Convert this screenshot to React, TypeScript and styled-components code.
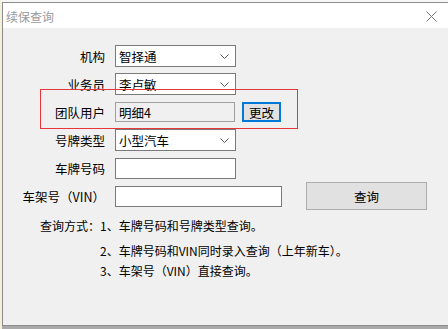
import React from 'react';
import styled, {createGlobalStyle} from 'styled-components';

const GlobalStyle = createGlobalStyle`
  html, body {
    margin: 0;
    padding: 0;
    background: #a9a9a9;
    overflow: hidden;
  }
  body {
    font-family: "Noto Sans CJK SC", "Microsoft YaHei", sans-serif;
    font-size: 12px;
    color: #000;
  }
`;

const rows: {label: string, value: string}[] = [
    {label: '机构', value: '智择通'},
    {label: '业务员', value: '李卢敏'},
];

function Chevron() {
    return (
        <svg width="9" height="6" viewBox="0 0 9 6">
            <path d="M0.5 0.5 L4.5 4.5 L8.5 0.5" fill="none" stroke="#555" strokeWidth="1"/>
        </svg>
    );
}

function Select({value}: {value: string}) {
    return (
        <SelectBox>
            <span>{value}</span>
            <ChevronWrap><Chevron/></ChevronWrap>
        </SelectBox>
    );
}

function App() {
    return (
        <Screen>
            <GlobalStyle/>
            <Window>
                <TitleBar>
                    <Title>续保查询</Title>
                    <Close>
                        <svg width="11" height="11" viewBox="0 0 11 11">
                            <path d="M0.5 0.5 L10.5 10.5 M10.5 0.5 L0.5 10.5" stroke="#777" strokeWidth="1"/>
                        </svg>
                    </Close>
                </TitleBar>
                <Body>
                    <Highlight/>
                    <Form>
                        {rows.map((r) => (
                            <Row key={r.label}>
                                <Label>{r.label}</Label>
                                <Select value={r.value}/>
                            </Row>
                        ))}
                        <Row>
                            <Label>团队用户</Label>
                            <ReadOnly>明细4</ReadOnly>
                            <SmallButton>更改</SmallButton>
                        </Row>
                        <Row>
                            <Label>号牌类型</Label>
                            <Select value="小型汽车"/>
                        </Row>
                        <Row>
                            <Label>车牌号码</Label>
                            <TextBox $width={121}/>
                        </Row>
                        <Row>
                            <Label>车架号（VIN）</Label>
                            <TextBox $width={167}/>
                            <QueryButton>查询</QueryButton>
                        </Row>
                    </Form>
                    <Notes>
                        <NoteHead>查询方式：</NoteHead>
                        <NoteLines>
                            <NoteLine>1、车牌号码和号牌类型查询。</NoteLine>
                            <NoteLine $top={11}>2、车牌号码和VIN同时录入查询（上年新车）。</NoteLine>
                            <NoteLine $top={6}>3、车架号（VIN）直接查询。</NoteLine>
                        </NoteLines>
                    </Notes>
                </Body>
            </Window>
        </Screen>
    );
}

const Screen = styled.div`
  width: 448px;
  height: 329px;
  overflow: hidden;
  background: #a9a9a9;
  border-left: 2px solid #f3f1dc;
  box-sizing: border-box;
  border-top: 2px solid #f7f7f7;
`;
const Window = styled.div`
  position: relative;
  width: 460px;
  height: 322px;
  border: 1px solid #8c8c8c;
  border-right: none;
  background: #f0f0f0;
  display: flex;
  flex-direction: column;
`;
const TitleBar = styled.div`
  height: 25px;
  background: #fff;
  display: flex;
  align-items: center;
  padding-left: 3px;
  padding-right: 12px;
  width: 431px;
`;
const Title = styled.div`
  flex: 1;
  color: #9a9a9a;
  font-size: 12px;
  line-height: 1;
  padding-top: 2px;
`;
const Close = styled.div`
  display: flex;
  align-items: center;
  padding-top: 2px;
`;
const Body = styled.div`
  position: relative;
  flex: 1;
  padding-top: 17px;
`;
const Highlight = styled.div`
  position: absolute;
  left: 37px;
  top: 61px;
  width: 256px;
  height: 38px;
  border: 1px solid #e8363a;
  pointer-events: none;
`;
const Form = styled.div`
  display: flex;
  flex-direction: column;
  gap: 6px;
`;
const Row = styled.div`
  display: flex;
  align-items: center;
  height: 22px;
`;
const Label = styled.div`
  width: 102px;
  margin-right: 10px;
  text-align: right;
  white-space: nowrap;
  font-size: 12.5px;
`;
const SelectBox = styled.div`
  box-sizing: border-box;
  width: 121px;
  height: 22px;
  border: 1px solid #7a7a7a;
  background: #fff;
  display: flex;
  align-items: center;
  padding-left: 3px;
  padding-right: 6px;
  font-size: 12.5px;
  span { flex: 1; }
`;
const ChevronWrap = styled.div`
  display: flex;
  align-items: center;
  padding-top: 2px;
`;
const ReadOnly = styled.div`
  box-sizing: border-box;
  width: 120px;
  height: 20px;
  border: 1px solid #a0a0a0;
  background: #f0f0f0;
  display: flex;
  align-items: center;
  padding-left: 3px;
  font-size: 12.5px;
`;
const SmallButton = styled.div`
  box-sizing: border-box;
  width: 39px;
  height: 20px;
  margin-left: 7px;
  border: 2px solid #0078d7;
  background: #e1e1e1;
  display: flex;
  align-items: center;
  justify-content: center;
  font-size: 12.5px;
`;
const TextBox = styled.div<{$width: number}>`
  box-sizing: border-box;
  width: ${p => p.$width}px;
  height: 21px;
  border: 1px solid #7a7a7a;
  background: #fff;
`;
const QueryButton = styled.div`
  box-sizing: border-box;
  width: 121px;
  height: 28px;
  margin-left: 24px;
  border: 1px solid #adadad;
  background: #e1e1e1;
  display: flex;
  align-items: center;
  justify-content: center;
  font-size: 12.5px;
`;
const Notes = styled.div`
  display: flex;
  margin-top: 12px;
  padding-left: 37px;
  font-size: 12px;
`;
const NoteHead = styled.div`
  width: 60px;
  line-height: 14px;
`;
const NoteLines = styled.div`
  display: flex;
  flex-direction: column;
`;
const NoteLine = styled.div<{$top?: number}>`
  line-height: 14px;
  margin-top: ${p => p.$top || 0}px;
  white-space: nowrap;
`;

export default App;
